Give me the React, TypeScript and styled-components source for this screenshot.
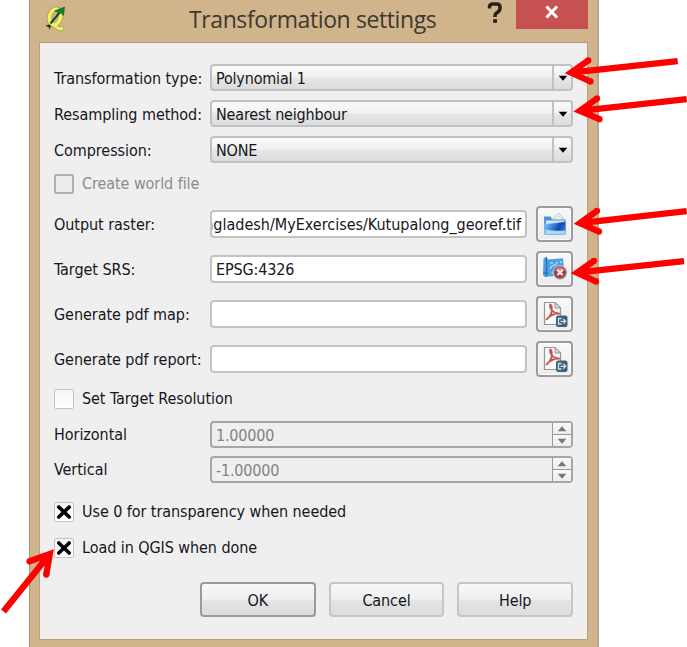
import React from 'react';
import styled, { createGlobalStyle } from 'styled-components';

const GlobalStyle = createGlobalStyle`
  * { box-sizing: border-box; }
  body {
    margin: 0;
    background: #fff;
    overflow: hidden;
    font-family: "DejaVu Sans Condensed", "DejaVu Sans", sans-serif;
    font-size: 16px;
    color: #16161c;
  }
`;

const Page = styled.main`
  position: relative;
  width: 687px;
  height: 647px;
  padding-left: 29px;
  overflow: hidden;
`;

const Frame = styled.section`
  display: flex;
  flex-direction: column;
  width: 570px;
  height: 647px;
  padding: 0 9px 7px 9px;
  background: #cfb48c;
  border-left: 1px solid #a8916f;
  border-right: 2px solid #b5a68c;
`;

const TitleBar = styled.header`
  display: flex;
  flex: 0 0 42px;
  align-items: flex-start;
`;

const AppIcon = styled.svg`
  flex: none;
  margin: 6px 0 0 6px;
`;

const Title = styled.h1`
  flex: none;
  width: 252px;
  margin: 3px 0 0 122px;
  font: 400 23px/32px "Open Sans", "Noto Sans", sans-serif;
  letter-spacing: -0.4px;
  white-space: nowrap;
  color: #40382f;
`;

const HelpMark = styled.svg`
  flex: none;
  margin: 2px 0 0 46px;
`;

const CloseButton = styled.button`
  display: flex;
  justify-content: center;
  width: 72px;
  height: 29px;
  margin-left: 13px;
  padding: 5px 0 0;
  border: 0;
  background: #c75050;
`;

const Panel = styled.form`
  flex: 1;
  padding: 21px 14px 0 14px;
  background: #efefef;
  border: 1px solid #bb9f82;
  border-top-color: #b39a77;
  box-shadow: inset 1px 1px 0 #f6e9e6, inset -1px -1px 0 #f4efe9;
`;

const Row = styled.div<{ $top?: number; $height: number }>`
  display: grid;
  grid-template-columns: 156px 1fr auto;
  align-items: center;
  height: ${p => p.$height}px;
  margin-top: ${p => p.$top ?? 0}px;
`;

const Label = styled.label<{ $shift?: number }>`
  line-height: 20px;
  letter-spacing: -0.05px;
  white-space: nowrap;
  padding-top: ${p => p.$shift ?? 0}px;
`;

const Combo = styled.div`
  display: grid;
  grid-template-columns: 1fr 19px;
  grid-column: 2 / 4;
  height: 27px;
  padding-left: 4px;
  border: 2px solid #c1c1c1;
  border-radius: 4px;
  background: linear-gradient(#fafafa 0, #f1f1f1 46%, #e6e6e6 54%, #dcdcdc 100%);
  line-height: 25px;
  letter-spacing: -0.18px;
`;

const ComboArrow = styled.span`
  display: flex;
  align-items: center;
  justify-content: center;
  height: 23px;
  border-left: 2px solid #c1c1c1;
`;

const TextInput = styled.div`
  display: flex;
  width: 317px;
  height: 28px;
  overflow: hidden;
  padding: 0 4px;
  border: 2px solid #c3c3c3;
  border-radius: 4px;
  background: #fff;
  line-height: 25px;
  letter-spacing: -0.15px;
  white-space: nowrap;
`;

const PathInput = styled(TextInput)`
  justify-content: flex-end;
  padding: 0 4px 0 0;
  letter-spacing: 0;
`;

const ToolButton = styled.button`
  display: flex;
  align-items: center;
  justify-content: center;
  width: 37px;
  height: 36px;
  padding: 0;
  border: 2px solid #9c9c9c;
  border-radius: 4px;
  background: linear-gradient(#f8f8f8, #ececec);
  box-shadow: inset 0 0 0 1px #fbfbfb;
`;

const SpinBox = styled.div`
  display: grid;
  grid-template-columns: 1fr 19px;
  grid-template-rows: 23px;
  grid-column: 2 / 4;
  height: 27px;
  padding-left: 4px;
  border: 2px solid #a6a6a6;
  border-radius: 4px;
  color: #828282;
  line-height: 26px;
  letter-spacing: -0.2px;
`;

const Steps = styled.span`
  display: grid;
  grid-template-rows: 11px 12px;
  border-left: 1px solid #999;
`;

const Step = styled.span`
  display: flex;
  align-items: center;
  justify-content: center;
  background: linear-gradient(#f9f9f9, #ededed);

  & + & { border-top: 1px solid #999; }
`;

const CheckRow = styled.label<{ $top: number; $disabled?: boolean }>`
  display: flex;
  align-items: center;
  gap: 8px;
  height: 21px;
  margin-top: ${p => p.$top}px;
  line-height: 20px;
  letter-spacing: -0.07px;
  color: ${p => (p.$disabled ? '#8b8b8b' : 'inherit')};
`;

const CheckBox = styled.span<{ $disabled?: boolean }>`
  display: flex;
  align-items: center;
  justify-content: center;
  width: 20px;
  height: 20px;
  border: ${p => (p.$disabled ? '2px solid #b0b0b0' : '1px solid #c3c3c3')};
  border-radius: 2px;
  background: ${p => (p.$disabled ? '#ebebeb' : 'linear-gradient(#f7f4f4, #fff)')};
`;

const Buttons = styled.footer`
  display: flex;
  gap: 13px;
  margin: 24px 0 0 146px;
`;

const PushButton = styled.button<{ $primary?: boolean }>`
  width: 116px;
  height: 35px;
  padding: 1px 0 0;
  font: inherit;
  color: inherit;
  letter-spacing: -0.1px;
  border: 2px solid ${p => (p.$primary ? '#9a9a9a' : '#c6c6c6')};
  border-radius: 4px;
  background: linear-gradient(#f8f8f8 0, #efefef 50%, #e4e4e4 54%, #dcdcdc 100%);
`;

const Annotations = styled.svg`
  position: absolute;
  inset: 0;
  pointer-events: none;
`;

const Triangle = ({ up, muted }: { up?: boolean; muted?: boolean }) => (
  <svg width="10" height="6" viewBox="0 0 10 6">
    <path d={up ? 'M5 .3 9.300 5.300H.7Z' : 'M.7 .7H9.300L5 5.700Z'} fill={muted ? '#777' : '#000'} />
  </svg>
);

const Cross = () => (
  <svg width="16" height="16" viewBox="0 0 16 16">
    <path d="M2.800 3 13.200 13M13.200 3 2.800 13" stroke="#050505" strokeWidth="3.700" strokeLinecap="round" />
  </svg>
);

const FolderIcon = () => (
  <svg width="24" height="24" viewBox="0 0 24 24">
    <defs>
      <linearGradient id="folder" x1="0" y1="0" x2="1" y2=".35">
        <stop offset="0" stopColor="#8fc6f0" />
        <stop offset=".4" stopColor="#3e8bdd" />
        <stop offset=".75" stopColor="#1247b4" />
        <stop offset="1" stopColor="#2d6fd0" />
      </linearGradient>
    </defs>
    <path d="M8 8 16 1.200 22 8.500V11H8Z" fill="#f3f5f7" stroke="#aab7c2" strokeWidth=".8" />
    <path d="m11 7.500 5-3.500 3.500 4" fill="none" stroke="#c9d1d8" strokeWidth=".8" />
    <path d="M1 4.500h6.500l2 3H22.500v15H1.500Z" fill="#4a93d9" />
    <path d="M3 8.500h18.500v3.500L3 12.800Z" fill="#cfe7f9" />
    <path d="M1.800 12 13 11l9.500-1.200v12.200L2 22.500Z" fill="url(#folder)" />
    <path d="M2.500 17.500q9 2 20 1v3.300l-20 .7Z" fill="#a9dcf7" />
  </svg>
);

const CrsIcon = () => (
  <svg width="26" height="26" viewBox="0 0 26 26">
    <path d="M1.500 2.500 4 1l2 2.500L21 2.200l1.500 17L7 20.500l-4 .8L1 19Z" fill="#4b9ee2" />
    <path d="M4.500 1v19M1.500 16l2.500 2 2-1.500" fill="none" stroke="#1e75bd" strokeWidth="1.200" />
    <path d="m8 13 2-3 4-1.500 1.500-3M9.500 17h3M18 5.500l2 1M8 7h3" fill="none" stroke="#a8d4f5" strokeWidth="1.500" />
    <circle cx="18" cy="16.500" r="7" fill="#7c8288" stroke="#d8dadc" strokeWidth=".7" />
    <circle cx="18" cy="16.300" r="5.600" fill="#b3323b" />
    <path d="M13 14.700a5.300 5.300 0 0 1 10 0Z" fill="#d77b7e" />
    <path d="m15.500 14 5 5m0-5-5 5" stroke="#fff" strokeWidth="2.100" />
  </svg>
);

const PdfIcon = () => (
  <svg width="26" height="26" viewBox="0 0 26 26">
    <path d="M2.500 1.500H13L18.500 7V23.500H2.500Z" fill="#f8f8f8" stroke="#969696" strokeWidth="1.200" />
    <path d="M13 1.500V7H18.500Z" fill="#dcdcdc" stroke="#969696" />
    <path d="M8 3.500C7.500 8 10.500 12 17.500 12.700 12 12.300 7 15.500 4.500 18.500 8 16 10.800 12 9.600 4.600Z" fill="#f1c3c1" stroke="#c4504c" strokeWidth="1.700" strokeLinejoin="round" />
    <rect x="14" y="14.500" width="11.500" height="11.500" rx="2.200" fill="#3d617c" />
    <path d="M19.500 17.500H16.500V23H19.500M18.500 20.300H23.300M21.300 18l2.400 2.300-2.400 2.300" fill="none" stroke="#d2dde6" strokeWidth="1.300" />
  </svg>
);

const combos: [string, string][] = [
  ['Transformation type:', 'Polynomial 1'],
  ['Resampling method:', 'Nearest neighbour'],
  ['Compression:', 'NONE'],
];

const arrows = [
  'M677.700 61.200 571 72.700M588.200 60.500 571 72.700 590.500 81.500',
  'M686.700 99.100 579.800 110.800M597 98.500 579.800 110.800 599.500 119.200',
  'M686.700 211.100 580 223.200M597 210.800 580 223.200 599 231.600',
  'M684 261.200 577 272.700M594 260.800 577 272.700 596 281.500',
  'M3.500 611.500 49.800 554M29.500 561.300 49.800 554 46.300 574.500',
];

export default function App() {
  return (
    <Page>
      <GlobalStyle />
      <Frame>
        <TitleBar>
          <AppIcon width="22" height="26" viewBox="0 0 22 26">
            <ellipse cx="10" cy="11" rx="5.500" ry="8" transform="rotate(14 10 11)" fill="none" stroke="#a39a4c" strokeWidth="5" />
            <path d="M7.500 19.500c3-1.500 4.500 4 8 3.500l3-1" fill="none" stroke="#a39a4c" strokeWidth="4.400" />
            <ellipse cx="10" cy="11" rx="5.500" ry="8" transform="rotate(14 10 11)" fill="none" stroke="#f0f066" strokeWidth="3.700" />
            <path d="M7.500 19.500c3-1.500 4.500 4 8 3.500l2.500-1" fill="none" stroke="#f0f066" strokeWidth="3" />
            <path d="M5.500 17.500 15 6" stroke="#174e20" strokeWidth="2" />
            <path d="m19.500 1-1 8.500-2.500-2.500L13.500 8l-1-2-3-1Z" fill="#14832a" stroke="#245626" strokeWidth=".6" />
            <path d="M.5 19.500 5 18.500l.8 1.500-1.300 4L4 21.500Z" fill="#292a1c" />
          </AppIcon>
          <Title>Transformation settings</Title>
          <HelpMark width="16" height="22" viewBox="0 0 16 22">
            <path d="M2.500 6.500V5Q2.500 2 6 2h3.500Q13 2 13 5v1.500q0 2-2 3.500l-1.500 1Q8 12 8 14v1" fill="none" stroke="#24211d" strokeWidth="3.500" />
            <path d="M6.100 17.200h3.900v3.600H6.100Z" fill="#24211d" />
          </HelpMark>
          <CloseButton type="button" aria-label="Close">
            <svg width="16" height="14" viewBox="0 0 16 14">
              <path d="m2.500 1.500 10.500 11m0-11-10.500 11" stroke="#fff" strokeWidth="3" />
            </svg>
          </CloseButton>
        </TitleBar>
        <Panel>
          {combos.map(([label, value], i) => (
            <Row key={label} $height={27} $top={i ? 9 : 0}>
              <Label $shift={2}>{label}</Label>
              <Combo>{value}<ComboArrow><Triangle /></ComboArrow></Combo>
            </Row>
          ))}
          <CheckRow $top={10} $disabled><CheckBox $disabled />Create world file</CheckRow>
          <Row $top={12} $height={36}>
            <Label $shift={1}>Output raster:</Label>
            <PathInput>ngladesh/MyExercises/Kutupalong_georef.tif</PathInput>
            <ToolButton type="button"><FolderIcon /></ToolButton>
          </Row>
          <Row $top={9} $height={36}>
            <Label $shift={1}>Target SRS:</Label>
            <TextInput>EPSG:4326</TextInput>
            <ToolButton type="button"><CrsIcon /></ToolButton>
          </Row>
          <Row $top={9} $height={36}>
            <Label $shift={1}>Generate pdf map:</Label>
            <TextInput />
            <ToolButton type="button"><PdfIcon /></ToolButton>
          </Row>
          <Row $top={9} $height={36}>
            <Label $shift={1}>Generate pdf report:</Label>
            <TextInput />
            <ToolButton type="button"><PdfIcon /></ToolButton>
          </Row>
          <CheckRow $top={11}><CheckBox />Set Target Resolution</CheckRow>
          {[['Horizontal', '1.00000'], ['Vertical', '-1.00000']].map(([label, value], i) => (
            <Row key={label} $top={i ? 8 : 12} $height={27}>
              <Label>{label}</Label>
              <SpinBox>
                {value}
                <Steps>
                  <Step><Triangle up muted /></Step>
                  <Step><Triangle muted /></Step>
                </Steps>
              </SpinBox>
            </Row>
          ))}
          <CheckRow $top={18}><CheckBox><Cross /></CheckBox>Use 0 for transparency when needed</CheckRow>
          <CheckRow $top={15}><CheckBox><Cross /></CheckBox>Load in QGIS when done</CheckRow>
          <Buttons>
            <PushButton type="button" $primary>OK</PushButton>
            <PushButton type="button">Cancel</PushButton>
            <PushButton type="button">Help</PushButton>
          </Buttons>
        </Panel>
      </Frame>
      <Annotations width="687" height="647" viewBox="0 0 687 647">
        {arrows.map(d => (
          <path key={d} d={d} fill="none" stroke="#f00" strokeWidth="6.300" strokeMiterlimit="8" />
        ))}
        {[[588.2, 60.5], [590.5, 81.5], [597, 98.5], [599.5, 119.2], [597, 210.8], [599, 231.6], [594, 260.8], [596, 281.5], [29.5, 561.3], [46.3, 574.5]].map(([x, y]) => (
          <circle key={`${x}-${y}`} cx={x} cy={y} r="3.150" fill="#f00" />
        ))}
      </Annotations>
    </Page>
  );
}
